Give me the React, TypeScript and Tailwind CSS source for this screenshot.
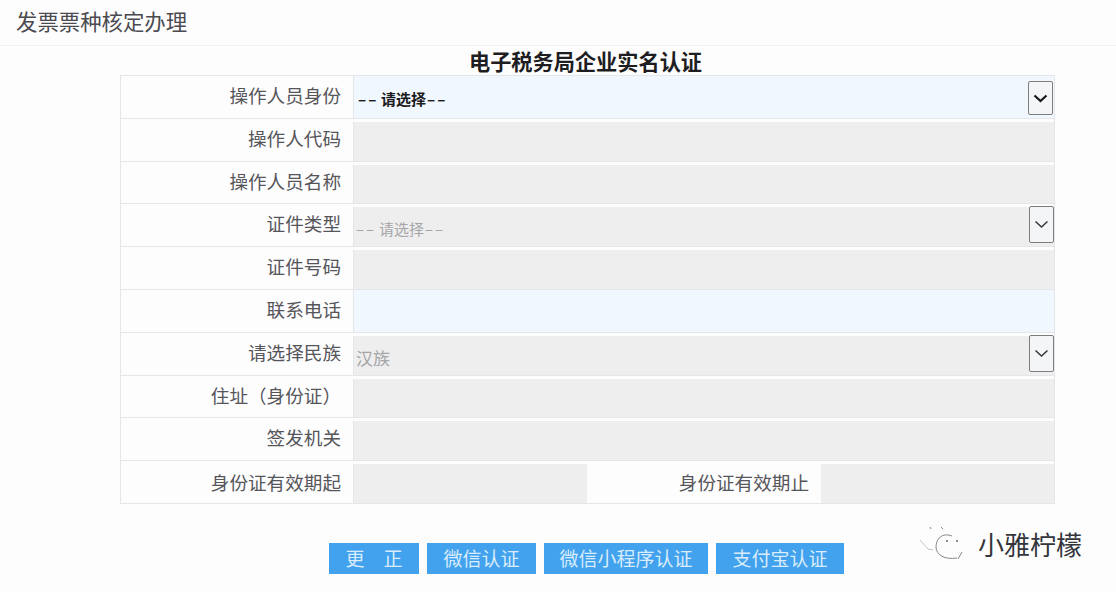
const CJK = "font-['Noto_Sans_CJK_SC','Liberation_Sans',sans-serif]";

type Row = {
  label: string;
  tone: "blue" | "gray";
  value?: string;
  strong?: boolean;
  select?: boolean;
};

const ROWS: Row[] = [
  { label: "操作人员身份", tone: "blue", value: "请选择", strong: true, select: true },
  { label: "操作人代码", tone: "gray" },
  { label: "操作人员名称", tone: "gray" },
  { label: "证件类型", tone: "gray", value: "请选择", select: true },
  { label: "证件号码", tone: "gray" },
  { label: "联系电话", tone: "blue" },
  { label: "请选择民族", tone: "gray", value: "汉族", select: true },
  { label: "住址（身份证）", tone: "gray" },
  { label: "签发机关", tone: "gray" },
];

function SelectArrow({ strong }: { strong?: boolean }) {
  return (
    <div
      className={`absolute flex w-[25px] items-center justify-center rounded-[2px] border border-[#7d7d7d] bg-[#f4f5f7] ${
        strong ? "top-[5px] right-[1px] h-[34px]" : "top-[-1px] right-0 h-[37px]"
      }`}
    >
      <svg width="15" height="9" viewBox="0 0 15 9" fill="none">
        <path
          d="M1.5 1.5 L7.5 7 L13.5 1.5"
          stroke={strong ? "#15181c" : "#33373b"}
          strokeWidth={strong ? 2.2 : 1.5}
        />
      </svg>
    </div>
  );
}

function SelectValue({ text }: { text: string }) {
  if (text !== "请选择") return <span className="text-[17px]">{text}</span>;
  return (
    <span className="flex items-center whitespace-nowrap">
      <span className="w-[23px] tracking-[2px]">––</span>
      {text}
      <span className="pl-[1px] tracking-[2px]">––</span>
    </span>
  );
}

function FormRow({ row }: { row: Row }) {
  return (
    <div className="flex h-[42.8px] border-b border-[#e4e6ea]">
      <div className="flex w-[232px] shrink-0 items-center justify-end pr-3 pb-1 text-[18.6px] text-[#55555a]">
        {row.label}
      </div>
      <div
        className={`relative flex flex-1 items-center border-l border-[#e4e6ea] pt-[5px] text-[15px] ${
          row.tone === "blue" ? "bg-[#f1f7ff]" : "mt-[3px] bg-[#eeeeef]"
        } ${row.strong ? "pl-[4px] font-bold text-[#1c1c20]" : "pl-[2px] text-[#a5a5a8]"}`}
      >
        {row.value ? <SelectValue text={row.value} /> : null}
        {row.select ? <SelectArrow strong={row.strong} /> : null}
      </div>
    </div>
  );
}

function ActionButton({ label, width }: { label: string; width: string }) {
  return (
    <button className={`h-[31px] ${width} bg-[#43a2ee] text-[19px] text-[#d9ecfb]`}>{label}</button>
  );
}

export default function App() {
  return (
    <div className={`relative h-[592px] w-[1116px] overflow-hidden bg-[#fdfdfe] ${CJK}`}>
      <header className="flex h-[46px] items-center border-b border-[#eff0f2] pb-[2px] pl-[16px] text-[21.4px] text-[#4a4a50]">
        发票票种核定办理
      </header>

      <h1 className="h-[29px] pt-[1px] pl-[55px] text-center text-[21.2px] leading-[28px] font-bold text-[#1d1d22]">
        电子税务局企业实名认证
      </h1>

      <section className="ml-[120px] w-[935px] border-x border-t border-[#e4e6ea]">
        {ROWS.map((row) => (
          <FormRow key={row.label} row={row} />
        ))}
        <div className="flex h-[42.8px] border-b border-[#e4e6ea]">
          <div className="flex w-[232px] shrink-0 items-center justify-end pr-3 text-[18.6px] text-[#55555a]">
            身份证有效期起
          </div>
          <div className="mt-[3px] w-[234px] border-l border-[#e4e6ea] bg-[#eeeeef]" />
          <div className="flex w-[234px] items-center justify-end pr-3 text-[18.6px] text-[#55555a]">
            身份证有效期止
          </div>
          <div className="mt-[3px] flex-1 bg-[#eeeeef]" />
        </div>
      </section>

      <div className="mt-[39px] ml-[329px] flex gap-[8px]">
        <ActionButton label="更　正" width="w-[90px]" />
        <ActionButton label="微信认证" width="w-[109px]" />
        <ActionButton label="微信小程序认证" width="w-[164px]" />
        <ActionButton label="支付宝认证" width="w-[128px]" />
      </div>

      {/* watermark over the page */}
      <div className="absolute top-[526px] left-[920px] flex items-center gap-[14px]">
        <svg width="44" height="36" viewBox="0 0 44 36" fill="none" stroke="#85888d" strokeWidth="1">
          <path d="M32 10 C22 6 16 13 16 21 C16 29 25 34 37 32" />
          <path d="M0 14 L8 23 L13 24" stroke="#c4c6ca" />
          <path d="M10 1 L11 3 M21 1 L23 3 M42 26 L38 33" />
          <circle cx="27" cy="15" r="0.9" fill="#555" stroke="none" />
          <circle cx="37" cy="15" r="0.9" fill="#555" stroke="none" />
        </svg>
        <span className="text-[26px] leading-none text-[#33353b]">小雅柠檬</span>
      </div>
    </div>
  );
}
